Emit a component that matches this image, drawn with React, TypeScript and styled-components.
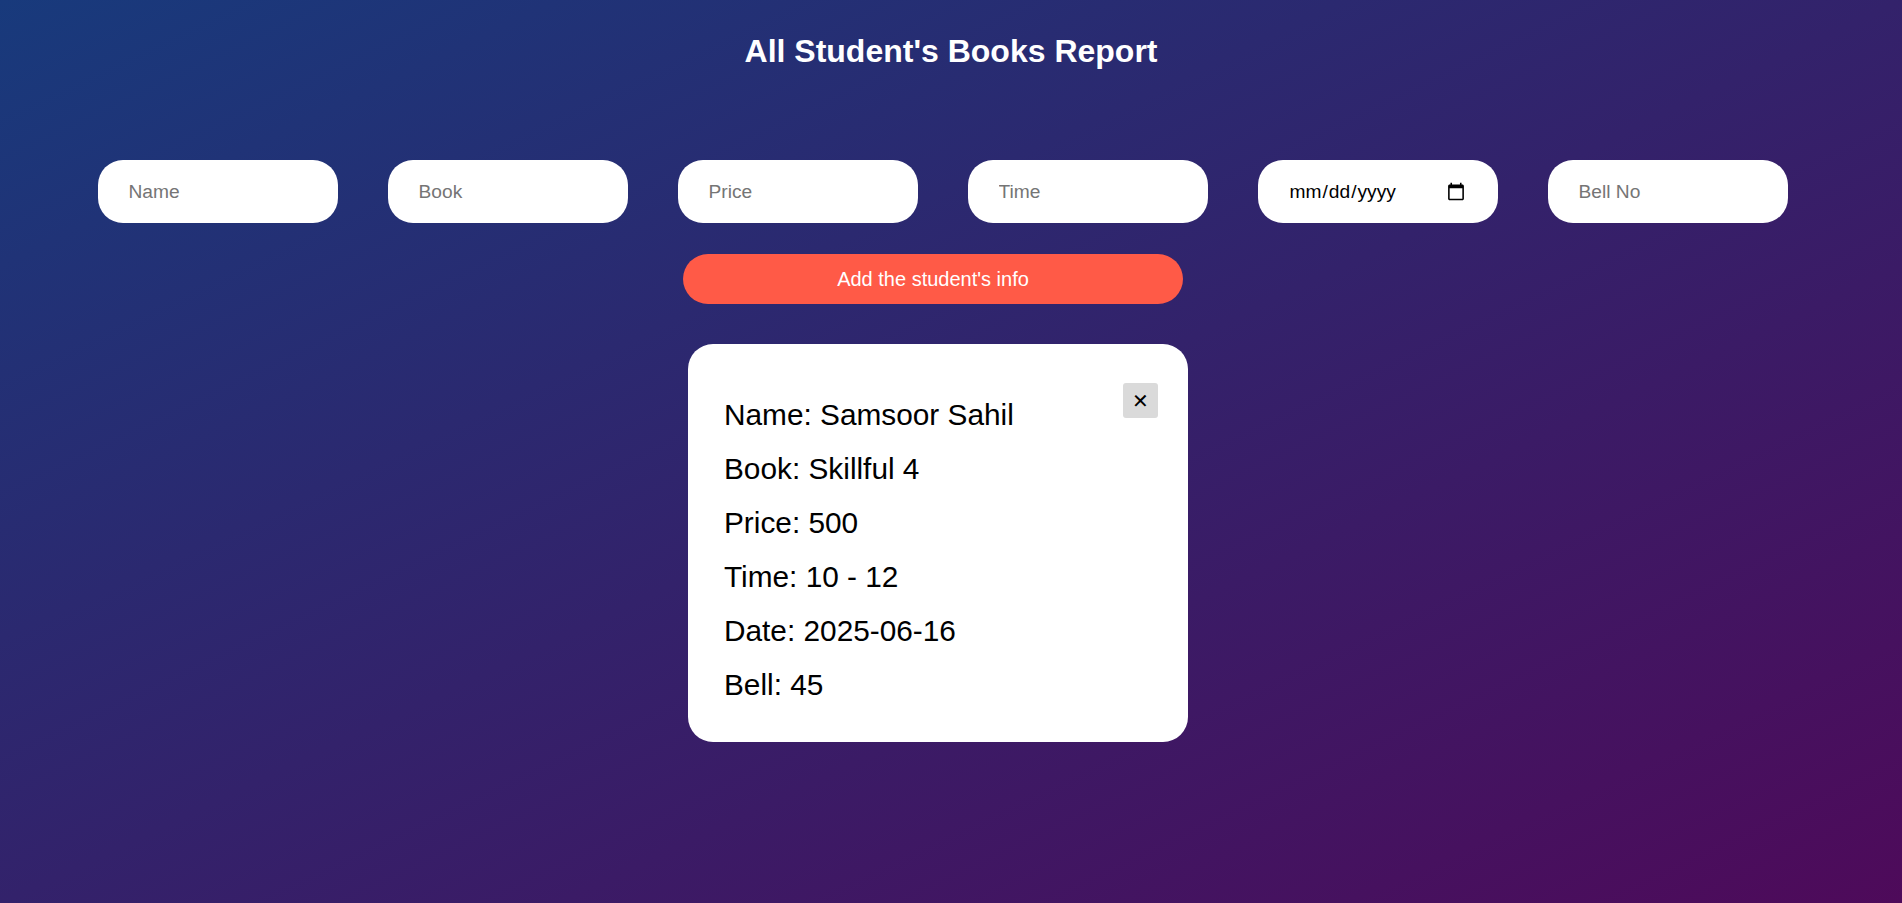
import React, { useState } from "react";
import styled, { createGlobalStyle } from "styled-components";

const GlobalStyle = createGlobalStyle`
  html, body {
    margin: 0;
    padding: 0;
    min-height: 100%;
  }
  body {
    font-family: "Liberation Sans", Arial, sans-serif;
    background: linear-gradient(to bottom right, #183a7c, #4e0a5a);
    min-height: 100vh;
  }
`;

const Page = styled.div`
  display: flex;
  flex-direction: column;
  align-items: center;
  min-height: 100vh;
  box-sizing: border-box;
  padding-top: 33px;
`;

const Title = styled.h1`
  color: #ffffff;
  font-size: 32px;
  font-weight: bold;
  margin: 0;
`;

const FormRow = styled.div`
  display: flex;
  justify-content: center;
  gap: 50px;
  margin-top: 90px;
  padding-right: 17px;
`;

const Field = styled.input`
  width: 240px;
  height: 63px;
  box-sizing: border-box;
  border: none;
  outline: none;
  border-radius: 25px;
  background: #ffffff;
  padding: 0 30px 0 31px;
  font-family: "Liberation Sans", Arial, sans-serif;
  font-size: 19.2px;
  color: #000000;

  &::placeholder {
    color: #757575;
  }
`;

const AddButton = styled.button`
  width: 500px;
  height: 50px;
  margin: 31px 36px 0 0;
  border: none;
  border-radius: 25px;
  background: #ff5a47;
  color: #ffffff;
  font-family: "Liberation Sans", Arial, sans-serif;
  font-size: 20px;
  cursor: pointer;
`;

const Card = styled.div`
  position: relative;
  width: 500px;
  box-sizing: border-box;
  margin: 40px 26px 0 0;
  padding: 54px 36px 40px;
  background: #ffffff;
  border-radius: 25px;
  display: flex;
  flex-direction: column;
  gap: 20px;
`;

const Line = styled.p`
  margin: 0;
  font-size: 29.8px;
  line-height: 34px;
  color: #000000;
`;

const CloseButton = styled.button`
  position: absolute;
  top: 39px;
  right: 30px;
  width: 35px;
  height: 35px;
  border: none;
  border-radius: 3px;
  background: #dadada;
  color: #000000;
  font-family: "DejaVu Sans", sans-serif;
  font-size: 20px;
  font-weight: bold;
  display: flex;
  align-items: center;
  justify-content: center;
  padding: 0;
  cursor: pointer;
`;

interface Student {
  name: string;
  book: string;
  price: string;
  time: string;
  date: string;
  bell: string;
}

const App: React.FunctionComponent = () => {
  const [students, setStudents] = useState<Student[]>([
    {
      name: "Samsoor Sahil",
      book: "Skillful 4",
      price: "500",
      time: "10 - 12",
      date: "2025-06-16",
      bell: "45",
    },
  ]);

  return (
    <Page>
      <GlobalStyle />
      <Title>All Student's Books Report</Title>
      <FormRow>
        <Field type="text" placeholder="Name" />
        <Field type="text" placeholder="Book" />
        <Field type="text" placeholder="Price" />
        <Field type="text" placeholder="Time" />
        <Field type="date" />
        <Field type="text" placeholder="Bell No" />
      </FormRow>
      <AddButton>Add the student's info</AddButton>
      {students.map((s, i) => (
        <Card key={i}>
          <CloseButton onClick={() => setStudents(students.filter((_, j) => j !== i))}>
            ✕
          </CloseButton>
          <Line>Name: {s.name}</Line>
          <Line>Book: {s.book}</Line>
          <Line>Price: {s.price}</Line>
          <Line>Time: {s.time}</Line>
          <Line>Date: {s.date}</Line>
          <Line>Bell: {s.bell}</Line>
        </Card>
      ))}
    </Page>
  );
};

export default App;
